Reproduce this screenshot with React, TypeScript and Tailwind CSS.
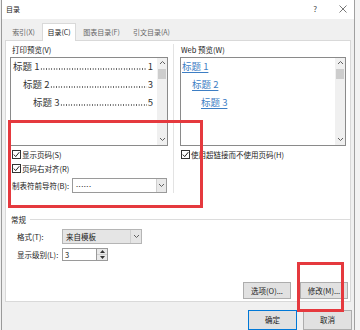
import React from 'react';

const ChevronUp = () => (
  <svg width="7" height="5" viewBox="0 0 7 5" fill="none">
    <path d="M1 4 L3.5 1.5 L6 4" stroke="#606060" strokeWidth="1" />
  </svg>
);

const ChevronDown = () => (
  <svg width="7" height="5" viewBox="0 0 7 5" fill="none">
    <path d="M1 1 L3.5 3.5 L6 1" stroke="#606060" strokeWidth="1" />
  </svg>
);

const Check = () => (
  <div className="w-[9px] h-[9px] border border-[#333] bg-white flex items-center justify-center shrink-0">
    <svg width="7" height="7" viewBox="0 0 7 7" fill="none">
      <path d="M0.8 3.6 L2.7 5.6 L6.3 1.2" stroke="#222" strokeWidth="1" />
    </svg>
  </div>
);

const Scrollbar = () => (
  <div className="w-[10px] bg-[#f0f0f0] flex flex-col items-center">
    <div className="h-[10px] flex items-center justify-center"><ChevronUp /></div>
    <div className="w-[8px] h-[10px] bg-[#cdcdcd] mt-[1px]"></div>
    <div className="flex-1"></div>
    <div className="h-[10px] flex items-center justify-center"><ChevronDown /></div>
  </div>
);

const PrintRow = ({ indent, label, page }: { indent: string; label: string; page: string }) => (
  <div className={`flex items-center h-[18px] text-[9.5px] text-[#333] pr-[4px] ${indent}`}>
    <span className="whitespace-nowrap">{label}</span>
    {/* dotted tab leader */}
    <div className="flex-1 h-[2px] mt-[6px] mx-[1px] bg-[radial-gradient(circle,#666_0.6px,transparent_0.9px)] bg-[length:2.6px_2px] bg-repeat-x"></div>
    <span>{page}</span>
  </div>
);

const WebRow = ({ indent, label }: { indent: string; label: string }) => (
  <div className={`h-[18px] flex items-center text-[9.5px] ${indent}`}>
    <span className="text-[#3d7ec4] underline underline-offset-2">{label}</span>
  </div>
);

export default function App() {
  return (
    <div className="relative w-[360px] h-[330px] overflow-hidden bg-[#f0f0f0] flex text-[#1a1a1a] font-['Noto_Sans_CJK_SC','Liberation_Sans',sans-serif] text-[7.5px]">
      {/* left edge of screen */}
      <div className="w-[2px] border-r border-[#9a9a9a]"></div>

      {/* dialog */}
      <div className="w-[352px] flex flex-col">
        {/* title bar */}
        <div className="h-[19px] bg-white flex items-center">
          <span className="ml-[4px] text-[7px]">目录</span>
          <span className="ml-auto text-[8px] text-[#444]">?</span>
          <svg className="ml-[22px] mr-[7px]" width="8" height="8" viewBox="0 0 8 8" fill="none">
            <path d="M0.5 0.5 L7.5 7.5 M7.5 0.5 L0.5 7.5" stroke="#555" strokeWidth="0.8" />
          </svg>
        </div>

        {/* tabs */}
        <div className="mt-[4px] h-[17px] pl-[3px] flex items-end text-[7px]">
          <div className="w-[37px] h-[15px] flex items-center justify-center text-[#666]">索引(X)</div>
          <div className="w-[34px] h-[18px] -mb-px relative z-10 bg-white border border-b-0 border-[#d9d9d9] flex items-center justify-center">目录(C)</div>
          <div className="w-[51px] h-[15px] flex items-center justify-center text-[#666]">图表目录(F)</div>
          <div className="w-[49px] h-[15px] flex items-center justify-center text-[#666]">引文目录(A)</div>
        </div>

        {/* panel */}
        <div className="ml-[3px] w-[346px] h-[264px] bg-white border border-[#d9d9d9] flex flex-col">
          <div className="flex pt-[2px] pb-[15px]">
            {/* print preview */}
            <div className="ml-[4px] w-[158px] flex flex-col">
              <div className="h-[14px] leading-[14px] pl-[2px]">打印预览(V)</div>
              <div className="h-[89px] border border-[#8a8a8a] bg-white flex">
                <div className="flex-1 flex flex-col -mt-[1px]">
                  <PrintRow indent="pl-[2px]" label="标题 1" page="1" />
                  <PrintRow indent="pl-[12px]" label="标题 2" page="3" />
                  <PrintRow indent="pl-[22px]" label="标题 3" page="5" />
                </div>
                <Scrollbar />
              </div>
              <div className="mt-[2px] h-[14px] flex items-center pl-[2px] gap-[1px]">
                <Check />
                <span>显示页码(S)</span>
              </div>
              <div className="h-[14px] flex items-center pl-[2px] gap-[1px]">
                <Check />
                <span>页码右对齐(R)</span>
              </div>
              <div className="mt-[2px] h-[15px] flex items-center pl-[2px]">
                <span className="w-[60px]">制表符前导符(B):</span>
                <div className="w-[95px] h-[15px] border border-[#9a9a9a] bg-white flex">
                  <span className="flex-1 pl-[3px] leading-[10px] tracking-[0.5px]">......</span>
                  <div className="w-[10px] bg-[#e9e9e9] border-l border-[#cfcfcf] flex items-center justify-center">
                    <ChevronDown />
                  </div>
                </div>
              </div>
            </div>

            {/* divider */}
            <div className="w-px bg-[#e3e3e3] ml-[5px] mt-[1px]"></div>

            {/* web preview */}
            <div className="ml-[6px] w-[166px] flex flex-col">
              <div className="h-[14px] leading-[14px] pl-[1px]">Web 预览(W)</div>
              <div className="h-[89px] border border-[#8a8a8a] bg-white flex">
                <div className="flex-1 flex flex-col -mt-[1px]">
                  <WebRow indent="pl-[1px]" label="标题 1" />
                  <WebRow indent="pl-[11px]" label="标题 2" />
                  <WebRow indent="pl-[20px]" label="标题 3" />
                </div>
                <Scrollbar />
              </div>
              <div className="mt-[2px] h-[14px] flex items-center pl-[1px] gap-[1px]">
                <Check />
                <span>使用超链接而不使用页码(H)</span>
              </div>
            </div>
          </div>

          {/* general group */}
          <div className="mt-[6px] h-[12px] flex items-center pl-[5px]">
            <span>常规</span>
            <div className="flex-1 h-px bg-[#dcdcdc] ml-[4px]"></div>
          </div>
          <div className="mt-[3px] h-[15px] flex items-center pl-[11px]">
            <span className="w-[45px]">格式(T):</span>
            <div className="w-[80px] h-[15px] border border-[#b5b5b5] bg-[#e5e5e5] flex">
              <span className="flex-1 pl-[3px] leading-[13px]">来自模板</span>
              <div className="w-[11px] border-l border-[#cfcfcf] flex items-center justify-center">
                <ChevronDown />
              </div>
            </div>
          </div>
          <div className="mt-[4px] h-[13px] flex items-center pl-[11px]">
            <span className="w-[45px]">显示级别(L):</span>
            <div className="w-[35px] h-[13px] border border-[#9a9a9a] bg-white pl-[2px] leading-[11px]">3</div>
            <div className="w-[11px] h-[13px] border border-l-0 border-[#9a9a9a] bg-[#e9e9e9] flex flex-col">
              <div className="flex-1 flex items-center justify-center border-b border-[#cfcfcf]">
                <svg width="5" height="3" viewBox="0 0 5 3"><path d="M0 3 L2.5 0 L5 3 Z" fill="#333" /></svg>
              </div>
              <div className="flex-1 flex items-center justify-center">
                <svg width="5" height="3" viewBox="0 0 5 3"><path d="M0 0 L2.5 3 L5 0 Z" fill="#333" /></svg>
              </div>
            </div>
          </div>
          <div className="mt-[21px] h-[17px] flex justify-end gap-[9px] pr-[2px]">
            <div className="w-[48px] h-[17px] bg-[#e1e1e1] border border-[#adadad] flex items-center justify-center">选项(O)...</div>
            <div className="w-[48px] h-[17px] bg-[#e1e1e1] border border-[#adadad] flex items-center justify-center">修改(M)...</div>
          </div>
        </div>

        {/* footer */}
        <div className="mt-[8px] flex justify-end gap-[6px] pr-[2px]">
          <div className="w-[49px] h-[20px] bg-[#e1e1e1] border border-[#0078d7] flex items-center justify-center">确定</div>
          <div className="w-[49px] h-[20px] bg-[#e1e1e1] border border-[#adadad] flex items-center justify-center">取消</div>
        </div>
      </div>

      {/* edge of window behind */}
      <div className="flex-1 border-l border-[#a0a0a0] bg-[#f3f3f3]"></div>

      {/* red annotation boxes */}
      <div className="absolute left-[8px] top-[120px] w-[195px] h-[88px] border-[3px] border-[#e5393e]"></div>
      <div className="absolute left-[297px] top-[262px] w-[47px] h-[50px] border-[3px] border-[#e5393e]"></div>
    </div>
  );
}
